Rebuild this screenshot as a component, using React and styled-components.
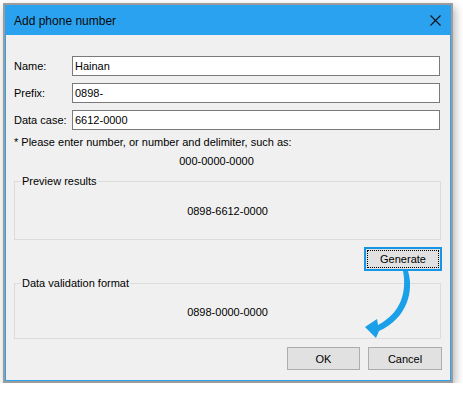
import React from "react";
import styled, { createGlobalStyle } from "styled-components";

const Global = createGlobalStyle`
  html, body { margin: 0; padding: 0; background: #ffffff; }
  body { font-family: "Liberation Sans", Arial, sans-serif; font-size: 11px; color: #000; }
  * { box-sizing: border-box; }
`;

const Window = styled.div`
  width: 450px;
  height: 380px;
  margin: 3px 0 0 3px;
  border: 2px solid #9c9c9c;
  box-shadow: 2px 4px 9px rgba(0, 0, 0, 0.3);
`;

const Frame = styled.div`
  height: 100%;
  border: 1px solid #2aa2ef;
  display: flex;
  flex-direction: column;
  background: #f0f0f0;
`;

const TitleBar = styled.div`
  height: 29px;
  flex: none;
  background: #2aa2ef;
  display: flex;
  align-items: center;
  justify-content: space-between;
  padding: 0 9px 0 8px;
`;

const Title = styled.span`
  font-size: 12px;
  color: #0a0a0a;
`;

const Content = styled.div`
  position: relative;
  flex: 1;
  display: flex;
  flex-direction: column;
  padding: 21px 9px 10px 8px;
`;

const Fields = styled.div`
  display: flex;
  flex-direction: column;
  gap: 7px;
`;

const Row = styled.div`
  display: grid;
  grid-template-columns: 58px 1fr;
  align-items: center;
`;

const Label = styled.label`
  font-size: 11px;
`;

const Input = styled.input`
  height: 20px;
  width: 368px;
  border: 1px solid #7a7a7a;
  background: #fff;
  padding: 0 2px;
  font-family: inherit;
  font-size: 11px;
  color: #000;
  outline: none;
`;

const Hint = styled.div`
  margin-top: 6px;
  line-height: 13px;
`;

const Example = styled.div`
  margin-top: 6px;
  line-height: 13px;
  text-align: center;
  padding-right: 22px;
`;

const Group = styled.div`
  position: relative;
  margin-top: ${(p) => p.$mt}px;
  height: ${(p) => p.$h}px;
  width: 427px;
  border: 1px solid #dcdcdc;
  display: flex;
  align-items: center;
  justify-content: center;
`;

const Legend = styled.span`
  position: absolute;
  top: -7px;
  left: 6px;
  padding: 0 1px;
  line-height: 13px;
  background: #f0f0f0;
`;

const Value = styled.span`
  line-height: 13px;
  margin-top: ${(p) => p.$mt || 0}px;
`;

const ButtonRow = styled.div`
  display: flex;
  justify-content: flex-end;
  gap: ${(p) => p.$gap || 0}px;
  margin-top: ${(p) => p.$mt}px;
  margin-right: -1px;
`;

const Button = styled.button`
  width: ${(p) => p.$w}px;
  height: ${(p) => p.$h}px;
  background: #e1e1e1;
  border: 1px solid #adadad;
  font-family: inherit;
  font-size: 11px;
  color: #000;
  padding: 0;
  ${(p) =>
    p.$focused &&
    `
    border: 2px solid #1595e6;
    outline: 1px dotted #000;
    outline-offset: -4px;
  `}
`;

const Arrow = styled.svg`
  position: absolute;
  left: 349px;
  top: 230px;
`;

export default function App() {
  return (
    <>
      <Global />
      <Window>
        <Frame>
          <TitleBar>
            <Title>Add phone number</Title>
            <svg width="11" height="11" viewBox="0 0 11 11">
              <path d="M0.5 0.5 L10.5 10.5 M10.5 0.5 L0.5 10.5" stroke="#111" strokeWidth="1.1" fill="none" />
            </svg>
          </TitleBar>
          <Content>
            <Fields>
              <Row>
                <Label>Name:</Label>
                <Input defaultValue="Hainan" />
              </Row>
              <Row>
                <Label>Prefix:</Label>
                <Input defaultValue="0898-" />
              </Row>
              <Row>
                <Label>Data case:</Label>
                <Input defaultValue="6612-0000" />
              </Row>
            </Fields>
            <Hint>* Please enter number, or number and delimiter, such as:</Hint>
            <Example>000-0000-0000</Example>
            <Group $mt={13} $h={59}>
              <Legend>Preview results</Legend>
              <Value $mt={2}>0898-6612-0000</Value>
            </Group>
            <ButtonRow $mt={7}>
              <Button $w={78} $h={24} $focused>Generate</Button>
            </ButtonRow>
            <Group $mt={12} $h={56}>
              <Legend>Data validation format</Legend>
              <Value $mt={2}>0898-0000-0000</Value>
            </Group>
            <ButtonRow $mt={8} $gap={8}>
              <Button $w={73} $h={23}>OK</Button>
              <Button $w={74} $h={23}>Cancel</Button>
            </ButtonRow>
            <Arrow width="60" height="80" viewBox="0 0 60 80">
              <path
                d="M48 6 L53 6 C59 25, 53 53, 24 66 L21 73 L10 62 L22 54 L23 60 C46 48, 52 27, 48 6 Z"
                fill="#19a0e8"
              />
            </Arrow>
          </Content>
        </Frame>
      </Window>
    </>
  );
}
